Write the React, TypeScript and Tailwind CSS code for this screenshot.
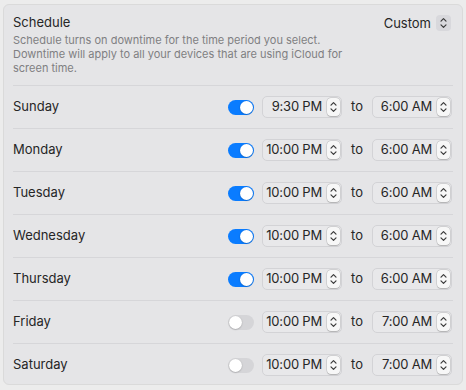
const days = [
  { name: "Sunday", on: true, from: "9:30 PM", to: "6:00 AM" },
  { name: "Monday", on: true, from: "10:00 PM", to: "6:00 AM" },
  { name: "Tuesday", on: true, from: "10:00 PM", to: "6:00 AM" },
  { name: "Wednesday", on: true, from: "10:00 PM", to: "6:00 AM" },
  { name: "Thursday", on: true, from: "10:00 PM", to: "6:00 AM" },
  { name: "Friday", on: false, from: "10:00 PM", to: "7:00 AM" },
  { name: "Saturday", on: false, from: "10:00 PM", to: "7:00 AM" },
];

function Chevrons() {
  return (
    <svg width="7" height="12" viewBox="0 0 7 12" fill="none" stroke="#3a3a3a" strokeWidth="1.2" strokeLinecap="round" strokeLinejoin="round">
      <path d="M1 4.2 3.5 1.7 6 4.2" />
      <path d="M1 7.8 3.5 10.3 6 7.8" />
    </svg>
  );
}

function Stepper() {
  return (
    <div className="flex h-[18px] w-[13px] items-center justify-center rounded-[4px] bg-[#f7f7f7] shadow-[0_0_0_0.5px_rgba(0,0,0,0.18),0_0.5px_1px_rgba(0,0,0,0.15)]">
      <Chevrons />
    </div>
  );
}

function TimeField({ value }: { value: string }) {
  return (
    <div className="flex h-[22px] w-[80px] items-center justify-end gap-[5px] rounded-[5px] border border-[#d3d3d6] bg-[#e8e8ea] pr-[1px]">
      <span className="text-[13px] tracking-[-0.2px] text-[#262626]">{value}</span>
      <Stepper />
    </div>
  );
}

function Toggle({ on }: { on: boolean }) {
  return (
    <div
      className={
        on
          ? "flex h-[15px] w-[26px] items-center justify-end rounded-full bg-[#0a7cff] px-[1px]"
          : "flex h-[15px] w-[26px] items-center justify-start rounded-full bg-[#d5d5d8] px-[1px]"
      }
    >
      <div className="h-[13px] w-[13px] rounded-full bg-white shadow-[0_0.5px_1.5px_rgba(0,0,0,0.3)]" />
    </div>
  );
}

export default function App() {
  return (
    <div className="h-[390px] w-[466px] bg-[#ececec] px-[3px] pt-[4px] font-['Inter',sans-serif] text-[#262626]">
      <div className="h-[381px] w-[460px] rounded-[6px] border border-[#dadada] bg-[#e5e5e7] px-[9px]">
        <div className="pb-[10px] pt-[9px]">
          <div className="flex items-start justify-between">
            <div className="text-[13px] leading-[16px]">Schedule</div>
            <div className="flex items-center gap-[5px] pr-[2px] pt-[1px]">
              <span className="text-[13px] leading-[16px]">Custom</span>
              <div className="flex h-[16px] w-[15px] items-center justify-center rounded-[4px] bg-[#d8d8dc]">
                <Chevrons />
              </div>
            </div>
          </div>
          <p className="mt-[2px] w-[340px] text-[11px] leading-[14px] text-[#7f7f82]">
            Schedule turns on downtime for the time period you select. Downtime will apply to all your devices that are using iCloud for screen time.
          </p>
        </div>
        {days.map((d) => (
          <div key={d.name} className="flex h-[43px] items-center border-t border-[#d6d6d9]">
            <span className="flex-1 text-[13px]">{d.name}</span>
            <Toggle on={d.on} />
            <div className="ml-[8px]">
              <TimeField value={d.from} />
            </div>
            <span className="w-[30px] text-center text-[13px]">to</span>
            <TimeField value={d.to} />
            <div className="w-[1px]" />
          </div>
        ))}
      </div>
    </div>
  );
}
